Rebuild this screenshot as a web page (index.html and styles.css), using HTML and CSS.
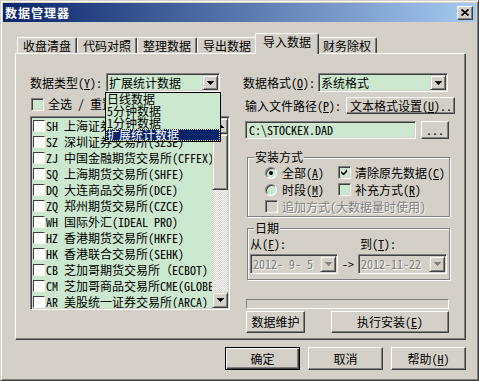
FILE: index.html
```html
<!DOCTYPE html>
<html lang="zh-CN">
<head>
  <meta charset="UTF-8">
  <meta name="viewport" content="width=device-width, initial-scale=1.0">
  <title>数据管理器</title>
  <link rel="stylesheet" href="styles.css">
</head>
<body>
  <div class="window">
    <div class="titlebar">
      <span class="title">数据管理器</span>
      <span class="close-btn">
        <svg width="8" height="7" viewBox="0 0 8 7"><path d="M0.5 0.5l7 6M7.5 0.5l-7 6" stroke="#000" stroke-width="1.8" fill="none"/></svg>
      </span>
    </div>

    <div class="main">
      <div class="tabs">
        <div class="tab">收盘清盘</div>
        <div class="tab">代码对照</div>
        <div class="tab">整理数据</div>
        <div class="tab">导出数据</div>
        <div class="tab active">导入数据</div>
        <div class="tab">财务除权</div>
      </div>

      <div class="panel">
        <!-- left: data type + market list -->
        <div class="col-left">
          <div class="row">
            <span class="lbl-type">数据类型(<u>Y</u>):</span>
            <div class="combo combo-type">
              <span class="combo-text">扩展统计数据</span>
              <span class="drop-btn"><svg width="7" height="4" viewBox="0 0 7 4"><path d="M0 0H7V1H6V2H5V3H4V4H3V3H2V2H1V1H0Z"/></svg></span>
              <ul class="drop-list">
                <li>日线数据</li>
                <li>5分钟数据</li>
                <li>1分钟数据</li>
                <li class="selected">扩展统计数据</li>
              </ul>
            </div>
          </div>

          <div class="select-all">
            <span class="chk"></span>
            <span>全选 / 重置</span>
          </div>

          <div class="market-list">
            <div class="items">
              <div class="item"><span class="chk white"></span>SH 上海证券交易所(SSE)</div>
              <div class="item"><span class="chk white"></span>SZ 深圳证券交易所(SZSE)</div>
              <div class="item"><span class="chk white"></span>ZJ 中国金融期货交易所(CFFEX)</div>
              <div class="item"><span class="chk white"></span>SQ 上海期货交易所(SHFE)</div>
              <div class="item"><span class="chk white"></span>DQ 大连商品交易所(DCE)</div>
              <div class="item"><span class="chk white"></span>ZQ 郑州期货交易所(CZCE)</div>
              <div class="item"><span class="chk white"></span>WH 国际外汇(IDEAL PRO)</div>
              <div class="item"><span class="chk white"></span>HZ 香港期货交易所(HKFE)</div>
              <div class="item"><span class="chk white"></span>HK 香港联合交易所(SEHK)</div>
              <div class="item"><span class="chk white"></span>CB 芝加哥期货交易所（ECBOT)</div>
              <div class="item"><span class="chk white"></span>CM 芝加哥商品交易所CME(GLOBEX)</div>
              <div class="item"><span class="chk white"></span>AR 美股统一证券交易所(ARCA)</div>
            </div>
            <div class="scrollbar">
              <div class="sb-btn"><svg width="7" height="4" viewBox="0 0 7 4"><path d="M3 0H4V1H5V2H6V3H7V4H0V3H1V2H2V1H3Z"/></svg></div>
              <div class="sb-thumb"></div>
              <div class="sb-track"></div>
              <div class="sb-btn"><svg width="7" height="4" viewBox="0 0 7 4"><path d="M0 0H7V1H6V2H5V3H4V4H3V3H2V2H1V1H0Z"/></svg></div>
            </div>
          </div>
        </div>

        <!-- right: format, path, install options -->
        <div class="col-right">
          <div class="row">
            <span class="lbl-format">数据格式(<u>O</u>):</span>
            <div class="combo combo-format">
              <span class="combo-text">系统格式</span>
              <span class="drop-btn"><svg width="7" height="4" viewBox="0 0 7 4"><path d="M0 0H7V1H6V2H5V3H4V4H3V3H2V2H1V1H0Z"/></svg></span>
            </div>
          </div>

          <div class="row-path">
            <span class="lbl-path">输入文件路径(<u>P</u>):</span>
            <button class="btn btn-textfmt">文本格式设置(<u>U</u>)...</button>
          </div>

          <div class="row-file">
            <div class="file-input">C:\STOCKEX.DAD</div>
            <button class="btn btn-browse">...</button>
          </div>

          <fieldset class="group group-install">
            <legend>安装方式</legend>
            <div class="install-body">
              <div class="opt"><span class="radio checked"></span><span>全部(<u>A</u>)</span></div>
              <div class="opt"><span class="chk green">
                <svg width="7" height="7" viewBox="0 0 7 7"><path d="M6 0V3L3 6H2L0 4V2L2 4H3Z"/></svg>
              </span><span>清除原先数据(<u>C</u>)</span></div>
              <div class="opt"><span class="radio"></span><span>时段(<u>M</u>)</span></div>
              <div class="opt"><span class="chk green"></span><span>补充方式(<u>R</u>)</span></div>
              <div class="opt span2"><span class="chk off"></span><span class="dim">追加方式(大数据量时使用)</span></div>
            </div>
          </fieldset>

          <fieldset class="group group-date">
            <legend>日期</legend>
            <div class="date-body">
              <span>从(<u>F</u>):</span>
              <span></span>
              <span class="lbl-to">到(<u>T</u>):</span>
              <div class="combo combo-off">
                <span class="combo-text dim">2012- 9- 5</span>
                <span class="drop-btn"><svg width="7" height="4" viewBox="0 0 7 4"><path d="M0 0H7V1H6V2H5V3H4V4H3V3H2V2H1V1H0Z" fill="#808080"/></svg></span>
              </div>
              <span class="arrow-to">-&gt;</span>
              <div class="combo combo-off">
                <span class="combo-text dim">2012-11-22</span>
                <span class="drop-btn"><svg width="7" height="4" viewBox="0 0 7 4"><path d="M0 0H7V1H6V2H5V3H4V4H3V3H2V2H1V1H0Z" fill="#808080"/></svg></span>
              </div>
            </div>
          </fieldset>

          <div class="progress"></div>

          <div class="action-row">
            <button class="btn btn-maint">数据维护</button>
            <button class="btn btn-run">执行安装(<u>E</u>)</button>
          </div>
        </div>
      </div>

      <div class="footer">
        <button class="btn btn-dlg default">确定</button>
        <button class="btn btn-dlg">取消</button>
        <button class="btn btn-dlg">帮助(<u>H</u>)</button>
      </div>
    </div>
  </div>
</body>
</html>
```

FILE: styles.css
```css
* {
  margin: 0;
  padding: 0;
  box-sizing: border-box;
}

body {
  background: #D4D0C8;
  font-family: "Noto Sans Mono CJK SC", "Noto Sans CJK SC", monospace;
  font-size: 12px;
  line-height: 14px;
  color: #000;
}

u {
  text-decoration: underline;
  text-underline-offset: 1px;
}

.window {
  width: 479px;
  height: 381px;
  border: 1px solid;
  border-color: #D4D0C8 #404040 #404040 #D4D0C8;
  box-shadow: inset 1px 1px #fff, inset -1px -1px #808080;
  padding: 2px;
}

.titlebar {
  height: 19px;
  display: flex;
  align-items: center;
  justify-content: space-between;
  background: linear-gradient(to right, #0A246A, #A6CAF0);
  padding: 0 3px 0 2px;
}

.title {
  color: #fff;
  font-weight: bold;
  letter-spacing: 1px;
}

.close-btn {
  width: 16px;
  height: 14px;
  display: flex;
  align-items: center;
  justify-content: center;
  background: #D4D0C8;
  border: 1px solid;
  border-color: #fff #404040 #404040 #fff;
  box-shadow: inset -1px -1px #808080;
}

.main {
  padding: 11px 10px 0 12px;
}

/* tabs */
.tabs {
  display: flex;
  align-items: flex-end;
  height: 20px;
  padding-left: 2px;
  position: relative;
  z-index: 1;
}

.tab {
  width: 60px;
  height: 16px;
  text-align: center;
  line-height: 14px;
  padding-top: 1px;
  border: 1px solid;
  border-bottom: 0;
  border-color: #fff #404040 transparent #fff;
  box-shadow: inset -1px 0 #808080;
  border-radius: 2px 2px 0 0;
}

.tab.active {
  width: 64px;
  height: 21px;
  margin: 0 -2px -1px;
  background: #D4D0C8;
  position: relative;
}

.panel {
  height: 287px;
  border: 1px solid;
  border-color: #fff #404040 #404040 #fff;
  box-shadow: inset -1px -1px #808080;
  display: grid;
  grid-template-columns: 200px 212px;
  column-gap: 13px;
  align-items: start;
  padding: 19px 0 0 14px;
}

/* shared controls */
.row {
  display: flex;
  align-items: center;
  height: 19px;
}

.combo {
  position: relative;
  display: flex;
  height: 19px;
  padding: 1px;
  background: #CCE8CF;
  border: 1px solid;
  border-color: #808080 #fff #fff #808080;
  box-shadow: inset 1px 1px #404040, inset -1px -1px #D4D0C8;
}

.combo-text {
  flex: 1;
  padding-left: 1px;
  line-height: 15px;
  white-space: nowrap;
  overflow: hidden;
}

.drop-btn {
  width: 16px;
  height: 15px;
  display: flex;
  align-items: center;
  justify-content: center;
  background: #D4D0C8;
  border: 1px solid;
  border-color: #D4D0C8 #404040 #404040 #D4D0C8;
  box-shadow: inset 1px 1px #fff, inset -1px -1px #808080;
}

.btn {
  font: inherit;
  color: #000;
  background: #D4D0C8;
  border: 1px solid;
  border-color: #fff #404040 #404040 #fff;
  box-shadow: inset -1px -1px #808080;
  white-space: nowrap;
}

.btn.default {
  border-color: #000;
  box-shadow: inset 1px 1px #fff, inset -1px -1px #404040, inset -2px -2px #808080;
}

.chk {
  width: 13px;
  height: 13px;
  flex: none;
  display: flex;
  align-items: center;
  justify-content: center;
  background: #CCE8CF;
  border: 1px solid;
  border-color: #808080 #fff #fff #808080;
  box-shadow: inset 1px 1px #404040, inset -1px -1px #D4D0C8;
}

.chk.white {
  width: 12px;
  height: 12px;
  background: #fff;
  box-shadow: none;
  border-color: #404040 #fff #fff #404040;
}

.chk.off {
  background: #D4D0C8;
}

.radio {
  width: 12px;
  height: 12px;
  flex: none;
  border-radius: 50%;
  display: flex;
  align-items: center;
  justify-content: center;
  background: #CCE8CF;
  border: 1px solid;
  border-color: #808080 #fff #fff #808080;
  box-shadow: inset 1px 1px #404040;
}

.radio.checked::after {
  content: "";
  width: 4px;
  height: 4px;
  border-radius: 50%;
  background: #000;
}

.dim {
  color: #808080;
  text-shadow: 1px 1px #fff;
}

/* left column */
.lbl-type {
  width: 76px;
  white-space: nowrap;
}

.combo-type {
  width: 114px;
}

.drop-list {
  position: absolute;
  top: 18px;
  left: -2px;
  width: 116px;
  list-style: none;
  border: 1px solid #000;
  background: #CCE8CF;
  z-index: 5;
}

.drop-list li {
  height: 12px;
  line-height: 12px;
  padding-left: 1px;
  white-space: nowrap;
}

.drop-list li.selected {
  background: #0A246A;
  color: #fff;
  outline: 1px dotted #E8E890;
  outline-offset: -1px;
}

.select-all {
  display: flex;
  align-items: center;
  gap: 4px;
  height: 24px;
  padding-left: 1px;
}

.market-list {
  display: flex;
  width: 200px;
  height: 194px;
  padding: 1px;
  background: #CCE8CF;
  border: 1px solid;
  border-color: #808080 #fff #fff #808080;
  box-shadow: inset 1px 1px #404040, inset -1px -1px #D4D0C8;
}

.items {
  flex: 1;
  overflow: hidden;
}

.item {
  display: flex;
  align-items: center;
  height: 16px;
  padding-left: 1px;
  white-space: nowrap;
}

.item .chk {
  margin-right: 1px;
}

.scrollbar {
  width: 16px;
  display: flex;
  flex-direction: column;
}

.sb-btn,
.sb-thumb {
  background: #D4D0C8;
  border: 1px solid;
  border-color: #D4D0C8 #404040 #404040 #D4D0C8;
  box-shadow: inset 1px 1px #fff, inset -1px -1px #808080;
}

.sb-btn {
  height: 16px;
  display: flex;
  align-items: center;
  justify-content: center;
}

.sb-thumb {
  height: 56px;
}

.sb-track {
  flex: 1;
  background: repeating-conic-gradient(#D4D0C8 0 25%, #fff 0 50%) 0 0 / 2px 2px;
}

/* right column */
.lbl-format {
  width: 75px;
  white-space: nowrap;
}

.combo-format {
  width: 130px;
}

.row-path {
  display: flex;
  align-items: center;
  height: 17px;
  margin-top: 5px;
  padding-left: 2px;
}

.lbl-path {
  width: 101px;
  white-space: nowrap;
}

.btn-textfmt {
  width: 109px;
  height: 17px;
  line-height: 13px;
  text-align: left;
  padding-left: 3px;
  overflow: hidden;
}

.row-file {
  display: flex;
  gap: 5px;
  height: 18px;
  margin-top: 7px;
  padding-left: 2px;
}

.file-input {
  width: 171px;
  padding: 1px 3px;
  line-height: 14px;
  background: #CCE8CF;
  border: 1px solid;
  border-color: #808080 #fff #fff #808080;
  box-shadow: inset 1px 1px #404040, inset -1px -1px #D4D0C8;
}

.btn-browse {
  width: 28px;
}

.group {
  width: 203px;
  margin-left: 4px;
  border: 1px solid #808080;
  box-shadow: inset 1px 1px #fff, 1px 1px #fff;
}

.group legend {
  margin-left: 6px;
  padding: 0 1px;
  line-height: 12px;
  background: #D4D0C8;
}

.group-install {
  margin-top: 12px;
}

.install-body {
  display: grid;
  grid-template-columns: 73px auto;
  grid-auto-rows: 17px;
  align-items: center;
  padding: 1px 0 1px 17px;
}

.opt {
  display: flex;
  align-items: center;
  gap: 4px;
  white-space: nowrap;
}

.opt .radio + span {
  margin-left: 1px;
}

.span2 {
  grid-column: 1 / 3;
}

.group-date {
  margin-top: 5px;
}

.date-body {
  display: grid;
  grid-template-columns: 88px 20px 89px;
  grid-template-rows: 14px 20px;
  row-gap: 3px;
  align-items: center;
  padding: 3px 0 5px 2px;
}

.lbl-to {
  padding-left: 2px;
}

.combo-off {
  height: 20px;
  background: #D4D0C8;
}

.combo-off .combo-text {
  line-height: 16px;
}

.combo-off .drop-btn {
  height: 16px;
}

.arrow-to {
  text-align: center;
}

.progress {
  width: 203px;
  height: 10px;
  margin: 19px 0 0 3px;
  border: 1px solid;
  border-color: #808080 #fff #fff #808080;
}

.action-row {
  display: flex;
  justify-content: space-between;
  width: 203px;
  height: 22px;
  margin: 2px 0 0 3px;
}

.btn-maint {
  width: 59px;
}

.btn-run {
  width: 118px;
}

.footer {
  display: flex;
  justify-content: flex-end;
  gap: 8px;
  padding-top: 7px;
}

.btn-dlg {
  width: 75px;
  height: 23px;
}
```
